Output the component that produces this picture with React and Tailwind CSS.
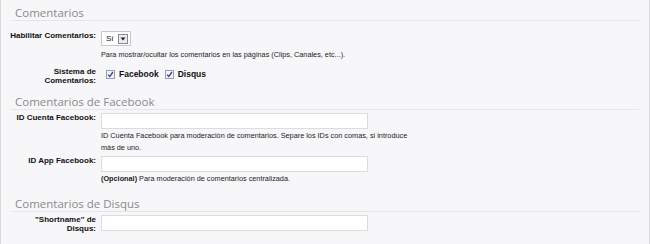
import React from "react";

function Heading({ children }) {
  return (
    <div className="mx-[10px] border-b border-[#e6e6ea] pl-[4px] font-['Open_Sans',sans-serif] text-[11.5px] leading-[15px] text-[#8a8a8a]">
      {children}
    </div>
  );
}

function Row({ label, children, className = "" }) {
  return (
    <div className={"flex items-start " + className}>
      <div className="w-[97px] shrink-0 pr-[2px] text-right font-['Liberation_Sans',sans-serif] text-[8px] font-bold leading-[9px] text-[#111]">
        {label}
      </div>
      <div className="pl-[3px]">{children}</div>
    </div>
  );
}

function Help({ children }) {
  return (
    <div className="font-['Liberation_Sans',sans-serif] text-[7.3px] leading-[12px] text-[#222]">
      {children}
    </div>
  );
}

function Check({ label }) {
  return (
    <label className="flex items-center gap-[4px] font-['Liberation_Sans',sans-serif] text-[8.5px] font-bold text-[#111]">
      <span className="flex h-[9px] w-[9px] items-center justify-center border border-[#9aa0ab] bg-[#f4f4f6]">
        <svg width="7" height="7" viewBox="0 0 7 7">
          <path d="M1 3.6 L2.8 5.4 L6 1" fill="none" stroke="#3344aa" strokeWidth="1.3" />
        </svg>
      </span>
      {label}
    </label>
  );
}

export default function App() {
  return (
    <div className="h-[244px] w-[650px] overflow-hidden border-x border-[#d8d8dc] bg-[#f7f7f9]">
      <div className="pt-[5px]">
        <Heading>Comentarios</Heading>

        <Row label="Habilitar Comentarios:" className="mt-[10px] items-center">
          <div className="flex h-[15px] w-[30px] items-center justify-between border border-[#c8c8cc] bg-white pl-[4px] pr-[2px] font-['Liberation_Sans',sans-serif] text-[8px] text-[#111]">
            Sí
            <span className="flex h-[10px] w-[10px] items-center justify-center border border-[#8a8a8a] bg-[#ececec]">
              <svg width="6" height="4" viewBox="0 0 6 4">
                <path d="M0.5 0.5 L5.5 0.5 L3 3.5 Z" fill="#222" />
              </svg>
            </span>
          </div>
        </Row>
        <div className="mt-[3px] pl-[100px]">
          <Help>Para mostrar/ocultar los comentarios en las páginas (Clips, Canales, etc...).</Help>
        </div>

        <Row label={<>Sistema de<br />Comentarios:</>} className="mt-[6px]">
          <div className="flex items-center gap-[6px] pl-[5px] pt-[1px]">
            <Check label="Facebook" />
            <Check label="Disqus" />
          </div>
        </Row>

        <div className="mt-[9px]">
          <Heading>Comentarios de Facebook</Heading>
        </div>

        <Row label="ID Cuenta Facebook:" className="mt-[3px] items-center">
          <div className="h-[16px] w-[267px] border border-[#dcdce0] bg-white" />
        </Row>
        <div className="mt-[1px] w-[412px] pl-[100px]">
          <Help>
            ID Cuenta Facebook para moderación de comentarios. Separe los IDs con comas, si introduce más de uno.
          </Help>
        </div>

        <Row label="ID App Facebook:" className="mt-[2px] items-center">
          <div className="h-[16px] w-[267px] border border-[#dcdce0] bg-white" />
        </Row>
        <div className="mt-[1px] pl-[100px]">
          <Help>
            <span className="font-bold">(Opcional)</span> Para moderación de comentarios centralizada.
          </Help>
        </div>

        <div className="mt-[11px]">
          <Heading>Comentarios de Disqus</Heading>
        </div>

        <Row label={<>"Shortname" de<br />Disqus:</>} className="mt-[3px]">
          <div className="h-[16px] w-[267px] border border-[#dcdce0] bg-white" />
        </Row>
      </div>
    </div>
  );
}
